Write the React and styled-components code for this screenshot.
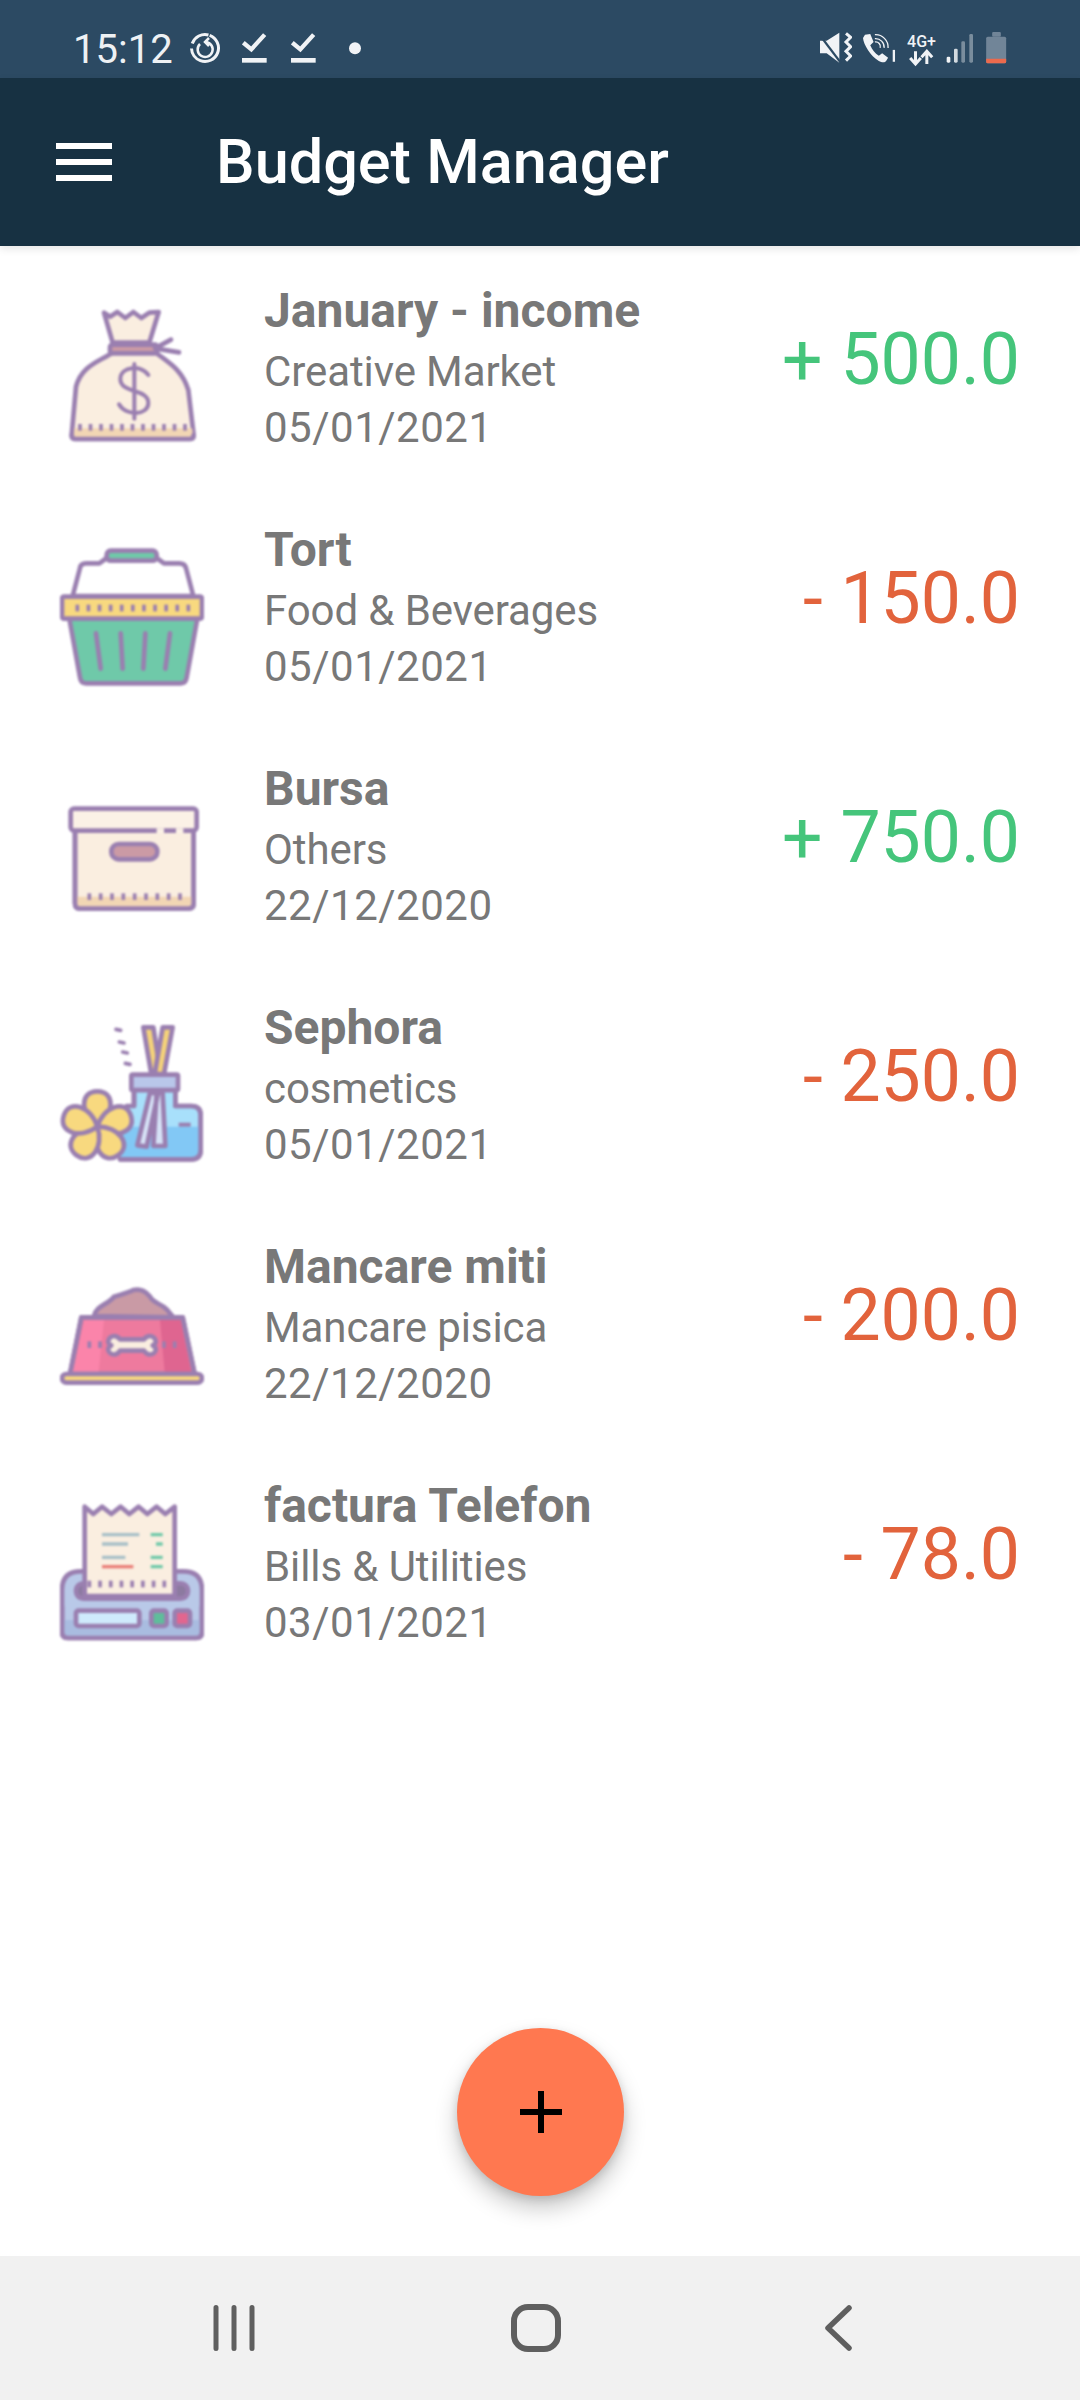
import React from 'react';
import styled, { createGlobalStyle } from 'styled-components';

const Global = createGlobalStyle`
  html, body { margin: 0; padding: 0; background: #fff; }
  body { font-family: Roboto, "Liberation Sans", sans-serif; }
`;

const Screen = styled.div`
  width: 1080px;
  height: 2400px;
  display: flex;
  flex-direction: column;
  overflow: hidden;
  background: #fff;
`;
const StatusBar = styled.div`
  height: 78px;
  flex: none;
  background: #2c4a63;
  display: flex;
  align-items: center;
  justify-content: space-between;
  padding: 0 73px 0 73px;
`;
const StatusGroup = styled.div`
  display: flex;
  align-items: center;
`;
const Clock = styled.span`
  font-size: 40px;
  color: #eef1f4;
  margin-right: 16px;
  position: relative;
  top: 11px;
  line-height: 1;
`;
const StatusIcon = styled.svg`
  display: block;
  height: 78px;
  flex: none;
  margin-left: ${p => p.$ml || 0}px;
`;
const AppBar = styled.header`
  height: 168px;
  flex: none;
  background: #173142;
  display: flex;
  align-items: center;
  padding-left: 56px;
  box-shadow: 0 3px 8px rgba(0, 0, 0, 0.1);
  position: relative;
  z-index: 1;
`;
const Burger = styled.div`
  width: 56px;
  height: 38px;
  display: flex;
  flex-direction: column;
  justify-content: space-between;
  margin-right: 104px;
  span { display: block; height: 6px; background: #fff; }
`;
const Title = styled.h1`
  margin: 0;
  font-size: 61.200px;
  font-weight: 500;
  color: #fff;
`;
const Main = styled.main`
  flex: 1;
  position: relative;
  padding-top: 4px;
`;
const Row = styled.div`
  height: 239px;
  display: flex;
  align-items: flex-start;
  padding: 53px 60px 0 60px;
  box-sizing: border-box;
`;
const IconBox = styled.svg`
  width: 144px;
  height: 144px;
  flex: none;
  margin-right: 60px;
  filter: blur(1px);
`;
const Info = styled.div`
  flex: 1;
  display: flex;
  flex-direction: column;
  margin-top: -23px;
  color: #787878;
`;
const Name = styled.div`
  font-size: 48px;
  font-weight: 700;
  line-height: 62px;
  margin-bottom: 2px;
`;
const Meta = styled.div`
  font-size: 42px;
  line-height: 56px;
  letter-spacing: ${p => p.$spacing || 0}px;
`;
const Amount = styled.div`
  font-size: 71.500px;
  line-height: 90px;
  margin-top: 12px;
  color: ${p => (p.$income ? '#45c57b' : '#e2633c')};
`;
const Fab = styled.button`
  position: absolute;
  left: 457px;
  bottom: 60px;
  width: 167px;
  height: 168px;
  border: 0;
  padding: 0;
  border-radius: 50%;
  background: #ff7850;
  box-shadow: 0 12px 22px rgba(0, 0, 0, 0.22), 0 3px 8px rgba(0, 0, 0, 0.12);
  display: flex;
  align-items: center;
  justify-content: center;
`;
const NavBar = styled.nav`
  height: 144px;
  flex: none;
  background: #f1f1f1;
  display: flex;
  align-items: center;
  padding-left: 207px;
`;
const NavIcon = styled.svg`
  display: block;
  flex: none;
  margin-right: ${p => p.$mr || 0}px;
`;

const S = '#9a7fb0';
const sp = { stroke: S, strokeWidth: 14, strokeLinejoin: 'round', strokeLinecap: 'round' };
const Stitches = ({ x1, x2, y, n }) => {
  const items = [];
  for (let i = 0; i < n; i++) {
    const x = x1 + ((x2 - x1) * i) / (n - 1);
    items.push(<line key={i} x1={x} x2={x} y1={y - 10} y2={y + 10} stroke={S} strokeWidth="11" />);
  }
  return <g>{items}</g>;
};

const Bag = () => (
  <IconBox viewBox="60 69 432 432">
    <path d="M192 98l18 12 22-14 24 18 24-18 24 18 24-16 28-2-28 92h-110z" fill="#faeee0" {...sp} />
    <path d="M220 216C180 245 125 255 108 320L95 465q0 12 12 12h342q12 0 12-12L445 330C425 265 380 245 345 216z" fill="#faeee0" {...sp} />
    <path d="M104 445h352l4 28H100z" fill="#f2d6b4" />
    <path d="M95 465q0 12 12 12h342q12 0 12-12" fill="none" {...sp} />
    <rect x="210" y="194" width="142" height="26" rx="8" fill="#cb9aa5" {...sp} />
    <path d="M345 205l48-26M345 205l72 12" fill="none" {...sp} />
    <Stitches x1={120} x2={435} y={442} n={11} />
    <path d="M325 285c-20-32-84-26-84 12 0 44 84 28 84 72 0 38-68 40-88 4M283 252v164" fill="none" stroke={S} strokeWidth="12" strokeLinecap="round" />
  </IconBox>
);
const Basket = () => (
  <IconBox viewBox="60 786 432 432">
    <path d="M98 948l22-84q2-14 18-14h40l22-16h150l22 16h46q16 0 20 14l22 84z" fill="#fff" {...sp} />
    <rect x="200" y="812" width="150" height="30" rx="12" fill="#6fc9a9" {...sp} />
    <path d="M88 1016l32 176q2 18 18 18h284q16 0 18-18l32-176z" fill="#6fc9a9" {...sp} />
    <rect x="66" y="950" width="420" height="66" rx="6" fill="#f8d97f" {...sp} />
    <Stitches x1={112} x2={445} y={984} n={11} />
    <path d="M168 1060l14 106M242 1060l6 106M316 1060l-6 106M390 1060l-14 106" fill="none" {...sp} />
  </IconBox>
);
const Box = () => (
  <IconBox viewBox="60 3 432 432">
    <path d="M105 150h356v220q0 16-16 16H120q-15 0-15-16z" fill="#faeee0" {...sp} />
    <path d="M105 350h356v20q0 16-16 16H120q-15 0-15-16z" fill="#f2d6b4" />
    <path d="M105 150v220q0 16 15 16h325q16 0 16-16V150" fill="none" {...sp} />
    <rect x="92" y="86" width="378" height="66" rx="10" fill="#fbf1e6" {...sp} />
    <path d="M350 152h22M408 152h22" stroke="#fbf1e6" strokeWidth="15" />
    <rect x="214" y="192" width="138" height="46" rx="22" fill="#cb9aa5" {...sp} />
    <Stitches x1={148} x2={420} y={350} n={9} />
  </IconBox>
);
const Diffuser = () => (
  <IconBox viewBox="60 720 432 432">
    <path d="M282 978V930h124v48h48q28 0 28 28v104q0 28-28 28H240L260 978z" fill="#a8e0fb" {...sp} />
    <path d="M250 1040h232v70q0 28-28 28H240z" fill="#82c8f5" />
    <path d="M282 978V930h124v48h48q28 0 28 28v104q0 28-28 28H240" fill="none" {...sp} />
    <path d="M310 742h30l22 140h-28z" fill="#f4d27a" {...sp} />
    <path d="M368 742h30l-26 140h-28z" fill="#f4d27a" {...sp} />
    <rect x="274" y="884" width="140" height="46" rx="4" fill="#b9c7ea" {...sp} />
    <path d="M330 938l-38 158 28 4 34-160zM350 938l-10 160h36l-8-158z" fill="#d6e2f6" {...sp} />
    <path d="M416 1034h36" stroke={S} strokeWidth="12" />
    <path d="M228 748l14 3M238 786l14 3M248 816l14 3M256 850l14 3" {...sp} strokeWidth="11" />
    <g fill="#f8d97f" {...sp}>
      {[0, 72, 144, 216, 288].map(a => (
        <path key={a} transform={`translate(172 1040) rotate(${a})`} d="M0 0C-52 -36 -54 -106 0 -106C54 -106 52 -36 0 0z" />
      ))}
    </g>
  </IconBox>
);
const Bowl = () => (
  <IconBox viewBox="60 -3 432 432">
    <path d="M162 168c8-34 44-34 60-58 26-8 44-12 58-20 28-6 40 10 50 20 12 22 34 20 50 38l20 24z" fill="#c99aa5" {...sp} />
    <path d="M124 172h304l36 170H90z" fill="#ee7a9e" {...sp} />
    <path d="M132 180h60l-16 156H98z" fill="#fb84aa" />
    <path d="M360 180h62l32 156h-80z" fill="#df6590" />
    <path d="M124 172h304l36 170H90z" fill="none" {...sp} />
    <rect x="66" y="342" width="420" height="26" rx="13" fill="#f8d97f" {...sp} />
    <path d="M240 238c-18-26-52 6-26 18-26 14 8 44 26 16h72c18 28 52-2 26-16 26-12-8-44-26-18z" fill="#faeee0" {...sp} />
    <Stitches x1={148} x2={180} y={254} n={2} />
    <Stitches x1={372} x2={404} y={254} n={2} />
  </IconBox>
);
const Printer = () => (
  <IconBox viewBox="60 714 432 432">
    <path d="M66 990q0-56 56-56h308q56 0 56 56v126q0 18-18 18H84q-18 0-18-18z" fill="#b9c9e8" {...sp} />
    <path d="M72 1080h408v36q0 14-14 14H86q-14 0-14-14z" fill="#a9bce0" />
    <path d="M66 1040v76q0 18 18 18h384q18 0 18-18v-76" fill="none" {...sp} />
    <rect x="108" y="970" width="336" height="46" rx="22" fill="#8c7aa0" {...sp} />
    <path d="M134 740l26 22 26-22 28 22 28-22 26 22 28-22 26 22 28-22 26 22 28-22v268H134z" fill="#faeee0" {...sp} />
    <path d="M186 824h112M186 852h78M186 892h70" stroke="#a7bfc7" strokeWidth="10" />
    <path d="M186 920h94" stroke="#ea7f78" strokeWidth="10" />
    <path d="M332 824h36M348 852h20M332 892h36M332 920h36" stroke="#6fc9a9" strokeWidth="10" />
    <Stitches x1={148} x2={405} y={972} n={9} />
    <rect x="108" y="1052" width="190" height="46" rx="8" fill="#cfeafc" {...sp} />
    <rect x="334" y="1052" width="46" height="46" rx="8" fill="#5fbd9b" {...sp} />
    <rect x="404" y="1052" width="46" height="46" rx="8" fill="#e2668f" {...sp} />
  </IconBox>
);

const rows = [
  { Icon: Bag, name: 'January - income', cat: 'Creative Market', date: '05/01/2021', amount: '+ 500.0', income: true },
  { Icon: Basket, name: 'Tort', cat: 'Food & Beverages', date: '05/01/2021', amount: '- 150.0' },
  { Icon: Box, name: 'Bursa', cat: 'Others', date: '22/12/2020', amount: '+ 750.0', income: true },
  { Icon: Diffuser, name: 'Sephora', cat: 'cosmetics', date: '05/01/2021', amount: '- 250.0' },
  { Icon: Bowl, name: 'Mancare miti', cat: 'Mancare pisica', date: '22/12/2020', amount: '- 200.0' },
  { Icon: Printer, name: 'factura Telefon', cat: 'Bills & Utilities', date: '03/01/2021', amount: '- 78.0' },
];

const W = '#f1f3f6';

const TaskDone = ({ ml }) => (
  <StatusIcon viewBox="0 0 75 234" width="25" $ml={ml}>
    <path d="M4 128l24 20 40-44" fill="none" stroke={W} strokeWidth="13" />
    <rect x="0" y="174" width="74" height="14" fill={W} />
  </StatusIcon>
);

export default function App() {
  return (
    <Screen>
      <Global />
      <StatusBar>
        <StatusGroup>
          <Clock>15:12</Clock>
          <StatusIcon viewBox="0 0 32 78" width="32">
            <circle cx="16" cy="48" r="13.500" fill="none" stroke={W} strokeWidth="3" strokeDasharray="58 5 20 2" transform="rotate(-70 16 48)" />
            <path d="M11 44a7.500 7.500 0 1 0 6-2" fill="none" stroke={W} strokeWidth="2.500" />
            <path d="M20 38l-4 4 4 4" fill="none" stroke={W} strokeWidth="2.500" />
          </StatusIcon>
          <TaskDone ml={21} />
          <TaskDone ml={24} />
          <StatusIcon viewBox="0 0 36 234" width="12" $ml={33}>
            <circle cx="18" cy="145" r="18" fill={W} />
          </StatusIcon>
        </StatusGroup>
        <StatusGroup>
          <StatusIcon viewBox="0 0 96 234" width="32">
            <path d="M0 122h20l38-24v90L20 160H0z" fill={W} />
            <path d="M0 106l62 82" stroke="#2c4a63" strokeWidth="7" />
            <path d="M78 100l14 12-14 14 14 14-14 14 14 14-14 14" fill="none" stroke={W} strokeWidth="9" />
          </StatusIcon>
          <StatusIcon viewBox="0 0 106 234" width="35" $ml={11}>
            <path d="M6 104l16-2 10 24-10 10c6 14 14 24 26 32l10-8 18 14-6 10c-4 6-14 4-22 0C22 168 2 134 0 114z" fill={W} />
            <path d="M36 104a38 38 0 0 1 40 40M36 116a26 26 0 0 1 28 28M36 126a14 14 0 0 1 16 18" fill="none" stroke={W} strokeWidth="4" />
            <rect x="90" y="150" width="7" height="36" fill={W} />
          </StatusIcon>
          <StatusIcon viewBox="0 0 92 234" width="31" $ml={8}>
            <text x="46" y="140" textAnchor="middle" fontFamily="Roboto, sans-serif" fontSize="48" fontWeight="500" fill={W}>4G+</text>
            <path d="M28 154v36m-16-16l16 18 16-18M62 192v-36m-16 16l16-18 16 18" fill="none" stroke={W} strokeWidth="9" />
          </StatusIcon>
          <StatusIcon viewBox="0 0 84 234" width="28" $ml={9}>
            <rect x="2" y="170" width="11" height="18" rx="4" fill={W} />
            <rect x="24" y="146" width="11" height="42" rx="4" fill={W} opacity="0.85" />
            <rect x="46" y="124" width="11" height="64" rx="4" fill={W} opacity="0.4" />
            <rect x="70" y="102" width="11" height="86" rx="4" fill={W} opacity="0.4" />
          </StatusIcon>
          <StatusIcon viewBox="0 0 62 234" width="21" $ml={12}>
            <rect x="18" y="96" width="26" height="14" rx="3" fill="#718598" />
            <rect x="0" y="110" width="60" height="80" rx="5" fill="#718598" />
            <path d="M0 176h60v9q0 5-5 5H5q-5 0-5-5z" fill="#ec6a4d" />
          </StatusIcon>
        </StatusGroup>
      </StatusBar>
      <AppBar>
        <Burger><span /><span /><span /></Burger>
        <Title>Budget Manager</Title>
      </AppBar>
      <Main>
        {rows.map(r => (
          <Row key={r.name}>
            <r.Icon />
            <Info>
              <Name>{r.name}</Name>
              <Meta $spacing={-0.1}>{r.cat}</Meta>
              <Meta $spacing={0.5}>{r.date}</Meta>
            </Info>
            <Amount $income={r.income}>{r.amount}</Amount>
          </Row>
        ))}
        <Fab aria-label="Add">
          <svg width="42" height="42" viewBox="0 0 42 42">
            <path d="M21 0v42M0 21h42" stroke="#000" strokeWidth="6" />
          </svg>
        </Fab>
      </Main>
      <NavBar>
        <NavIcon width="52" height="46" viewBox="0 0 52 46" $mr={252}>
          <path d="M9 2.500v41M27 2.500v41M45 2.500v41" stroke="#5f5f5f" strokeWidth="5" strokeLinecap="round" fill="none" />
        </NavIcon>
        <NavIcon width="50" height="48" viewBox="0 0 50 48" $mr={264}>
          <rect x="3" y="3" width="44" height="42" rx="14" fill="none" stroke="#5f5f5f" strokeWidth="6" />
        </NavIcon>
        <NavIcon width="28" height="46" viewBox="0 0 28 46">
          <path d="M24 3L3 23l21 20" fill="none" stroke="#5f5f5f" strokeWidth="5.500" strokeLinecap="round" strokeLinejoin="round" />
        </NavIcon>
      </NavBar>
    </Screen>
  );
}
